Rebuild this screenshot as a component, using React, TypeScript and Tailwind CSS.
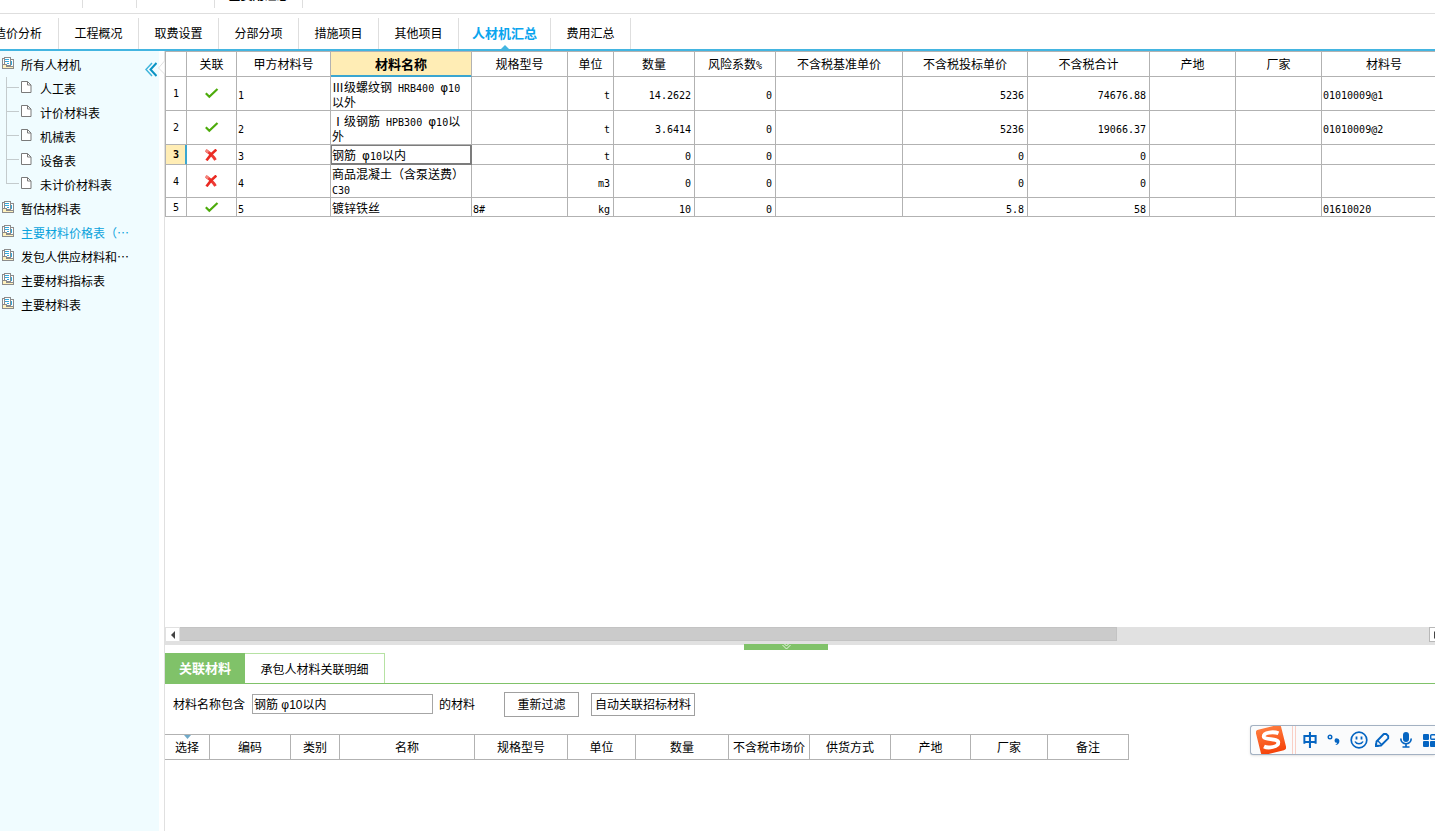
import { Fragment, useState } from "react";

const STRIP_CELLS = ["w-[83px]", "w-[54px]", "w-[78px]", "w-[88px]"];

const TABS = [
  { label: "造价分析", width: "w-[81px]" },
  { label: "工程概况", width: "w-20" },
  { label: "取费设置", width: "w-20" },
  { label: "分部分项", width: "w-20" },
  { label: "措施项目", width: "w-20" },
  { label: "其他项目", width: "w-20" },
  { label: "人材机汇总", width: "w-[92px]" },
  { label: "费用汇总", width: "w-20" },
];

const CHILDREN = ["人工表", "计价材料表", "机械表", "设备表", "未计价材料表"];

const FOLDERS = [
  "暂估材料表",
  "主要材料价格表（…",
  "发包人供应材料和…",
  "主要材料指标表",
  "主要材料表",
];

const COLUMNS = [
  { title: "", width: "w-[21px]", align: "text-center" },
  { title: "关联", width: "w-[50px]", align: "text-center" },
  { title: "甲方材料号", width: "w-[94px]", align: "text-left" },
  { title: "材料名称", width: "w-[141px]", align: "text-left" },
  { title: "规格型号", width: "w-[96px]", align: "text-left" },
  { title: "单位", width: "w-[46px]", align: "text-right" },
  { title: "数量", width: "w-[81px]", align: "text-right" },
  { title: "风险系数%", width: "w-[81px]", align: "text-right" },
  { title: "不含税基准单价", width: "w-[127px]", align: "text-right" },
  { title: "不含税投标单价", width: "w-[125px]", align: "text-right" },
  { title: "不含税合计", width: "w-[122px]", align: "text-right" },
  { title: "产地", width: "w-[86px]", align: "text-left" },
  { title: "厂家", width: "w-[86px]", align: "text-left" },
  { title: "材料号", width: "w-[125px]", align: "text-left" },
];

const ROWS = [
  {
    linked: true,
    height: "h-[34px]",
    cells: ["1", "Ⅲ级螺纹钢 HRB400 φ10以外", "", "t", "14.2622", "0", "", "5236", "74676.88", "", "", "01010009@1"],
  },
  {
    linked: true,
    height: "h-[34px]",
    cells: ["2", "Ⅰ级钢筋 HPB300 φ10以外", "", "t", "3.6414", "0", "", "5236", "19066.37", "", "", "01010009@2"],
  },
  {
    linked: false,
    height: "h-5",
    cells: ["3", "钢筋 φ10以内", "", "t", "0", "0", "", "0", "0", "", "", ""],
  },
  {
    linked: false,
    height: "h-[33px]",
    cells: ["4", "商品混凝土（含泵送费）C30", "", "m3", "0", "0", "", "0", "0", "", "", ""],
  },
  {
    linked: true,
    height: "h-[19px]",
    cells: ["5", "镀锌铁丝", "8#", "kg", "10", "0", "", "5.8", "58", "", "", "01610020"],
  },
];

const DETAIL_COLUMNS = [
  { title: "选择", width: "w-[45px]" },
  { title: "编码", width: "w-[81px]" },
  { title: "类别", width: "w-[49px]" },
  { title: "名称", width: "w-[135px]" },
  { title: "规格型号", width: "w-[93px]" },
  { title: "单位", width: "w-[68px]" },
  { title: "数量", width: "w-[93px]" },
  { title: "不含税市场价", width: "w-[81px]" },
  { title: "供货方式", width: "w-[81px]" },
  { title: "产地", width: "w-20" },
  { title: "厂家", width: "w-[77px]" },
  { title: "备注", width: "w-[81px]" },
];

// Half-width characters take half the advance of a Chinese character
function Mixed({ text }: { text: string }) {
  const parts = text.split(/([\x20-\x7e]+|φ)/);
  return (
    <>
      {parts.map((part, i) => {
        if (part === "φ") {
          return <span key={i} className="font-['DejaVu_Sans',sans-serif] leading-none">φ</span>;
        }
        if (i % 2 === 1) {
          return <span key={i} className="font-['DejaVu_Sans_Mono',monospace] text-[10px] leading-none">{part}</span>;
        }
        return <Fragment key={i}>{part}</Fragment>;
      })}
    </>
  );
}

function FolderIcon() {
  return (
    <svg className="mb-1 size-3 shrink-0" viewBox="0 0 12 12" shapeRendering="crispEdges">
      <path d="M0 1h2v7H0zM2 0h7v9H2zM9 2h3v8H9z" fill="#8c8c8c" />
      <path d="M1 2h1v6H1zM3 1h5v7H3zM9 3h2v6H9z" fill="#fff" />
      <path d="M3 2h4v1H3zM3 4h4v1H3zM5 6h2v1H5zM9 4h1v4H9z" fill="#35a9dc" />
      <path d="M0 7h5v2h7v3H0z" fill="#8c8c8c" />
      <path d="M1 8h3v2h7v1H1z" fill="#fff2bd" />
    </svg>
  );
}

function PageIcon() {
  return (
    <svg className="mb-1 h-3 w-[11px] shrink-0" viewBox="0 0 11 12" fill="none">
      <path d="M.5.5h6l3.500 3.500v7.500H.5z" fill="#fff" stroke="#7a7a7a" />
      <path d="M6.500.5V4H10" stroke="#7a7a7a" />
    </svg>
  );
}

function CheckIcon() {
  return (
    <svg className="mx-auto h-[11px] w-[14px]" viewBox="0 0 14 11" fill="none" role="img" aria-label="已关联">
      <path d="M.8 5.300l3.500 3.500L12.500 1" stroke="#4dab0c" strokeWidth="2.200" />
    </svg>
  );
}

function CrossIcon() {
  return (
    <svg className="mr-auto ml-[18px] size-3" viewBox="0 0 12 12" fill="none" role="img" aria-label="未关联">
      <path d="M1 1.500C4 3.500 8 6.500 10.500 11" stroke="#ee3a34" strokeWidth="2.800" />
      <path d="M11.400.6C7 4 4 7.500 1.500 11.400" stroke="#ea2a22" strokeWidth="2.600" />
      <path d="M.6 1.200l2.800 1.900" stroke="#f4847b" strokeWidth="2.600" />
    </svg>
  );
}

function Sidebar() {
  const [selected, setSelected] = useState(1);

  return (
    <aside className="relative w-[164px] shrink-0 pr-[5px]">
      <nav className="h-full bg-[#f0fcff] pt-0.5">
        <button className="flex h-6 items-center gap-[7px] pl-0.5">
          <FolderIcon />
          所有人材机
        </button>
        <ul>
          {CHILDREN.map((name, i) => (
            <li key={name} className="flex h-6 pl-1.5">
              <span className="flex w-[15px] flex-col">
                <span className="mr-0.5 h-[11px] border-b border-l border-[#c4cbcd]" />
                {i < CHILDREN.length - 1 && <span className="flex-1 border-l border-[#c4cbcd]" />}
              </span>
              <button className="flex items-center gap-2">
                <PageIcon />
                {name}
              </button>
            </li>
          ))}
        </ul>
        <ul>
          {FOLDERS.map((name, i) => (
            <li key={name}>
              <button
                onClick={() => setSelected(i)}
                className={`flex h-6 items-center gap-[7px] pl-0.5 whitespace-nowrap ${selected === i ? "text-[#0aa2dc]" : ""}`}
              >
                <FolderIcon />
                {name}
              </button>
            </li>
          ))}
        </ul>
      </nav>
      {/* Collapse handle */}
      <button aria-label="收起" className="absolute top-[11px] right-[7px]">
        <svg className="h-[15px] w-3" viewBox="0 0 12 15" fill="none" strokeWidth="1.500">
          <path d="M7 1L1 7.500 7 14" stroke="#41b6dd" />
          <path d="M11.500 1L5.500 7.500l6 6.500" stroke="#0a93c4" strokeWidth="2" />
        </svg>
      </button>
      <svg className="absolute top-1 -right-px h-6 w-[7px]" viewBox="0 0 7 24" fill="#fff">
        <path d="M6.500 0v6L.5 13l6 6v5" stroke="#e0e0e0" />
      </svg>
    </aside>
  );
}

function MaterialTable() {
  return (
    <table className="w-[1282px] table-fixed border-separate border-spacing-0 border-t border-l border-[#b2b2b2] leading-[15px]">
      <thead>
        <tr className="h-[25px]">
          {COLUMNS.map((col) => (
            <th
              key={col.title}
              className={`${col.width} border-r border-b p-0 pb-0.5 ${
                col.title === "材料名称"
                  ? "border-r-[#b2b2b2] border-b-[#3aa6d0] bg-[#ffedb5] text-[13px] font-bold shadow-[inset_0_-1px_0_#3aa6d0]"
                  : "border-[#b2b2b2] font-normal"
              }`}
            >
              <Mixed text={col.title} />
            </th>
          ))}
        </tr>
      </thead>
      <tbody>
        {ROWS.map((row, i) => {
          const current = i === 2;
          return (
            <tr key={i} className={row.height}>
              <th
                className={`border-r border-b border-[#b2b2b2] p-0 font-['DejaVu_Sans_Mono',monospace] text-[10px] ${
                  current ? "border-r-[#3aa6d0] bg-[#ffedb5] font-bold shadow-[inset_-1px_0_0_#3aa6d0]" : "font-normal"
                }`}
              >
                {i + 1}
              </th>
              <td className="border-r border-b border-[#b2b2b2] p-0">
                {row.linked ? <CheckIcon /> : <CrossIcon />}
              </td>
              {row.cells.map((cell, c) => (
                <td
                  key={c}
                  className={`border-r border-b py-0 pr-[3px] pl-px ${COLUMNS[c + 2].align} ${
                    current && c === 1
                      ? "border-[#7c7c7c] shadow-[inset_0_0_0_1px_#7c7c7c]"
                      : "border-[#b2b2b2]"
                  }`}
                >
                  <Mixed text={cell} />
                </td>
              ))}
            </tr>
          );
        })}
      </tbody>
    </table>
  );
}

function HorizontalScrollbar() {
  return (
    <div className="-mr-2 flex h-[18px] bg-[#e1e1e1] pl-px">
      <button aria-label="向左滚动" className="mt-px flex h-[13px] w-[13px] items-center justify-center bg-white">
        <svg className="h-2 w-1" viewBox="0 0 4 8">
          <path d="M4 0v8L0 4z" fill="#444" />
        </svg>
      </button>
      <div className="flex-1 pl-px">
        <div className="h-[14px] w-3/4 border-y border-r border-[#c3c3c3] bg-[#cbcbcb]" />
      </div>
      <button aria-label="向右滚动" className="flex h-[15px] w-[14px] items-center border border-[#b8b8b8] bg-white pl-1">
        <svg className="h-2 w-1" viewBox="0 0 4 8">
          <path d="M0 0v8l4-4z" fill="#444" />
        </svg>
      </button>
    </div>
  );
}

function LinkPanel() {
  const [keyword, setKeyword] = useState("钢筋 φ10以内");

  return (
    <section className="min-h-[186px] shrink-0">
      <div className="h-2">
        <button aria-label="折叠面板" className="relative -top-px ml-[579px] flex h-1.5 w-[84px] justify-center bg-[#80c269]">
          <svg className="h-1.5 w-[9px]" viewBox="0 0 9 6" fill="none" stroke="#e9f6e4">
            <path d="M.5 1L4.500 5l4-4M2.500 0l2 2 2-2" />
          </svg>
        </button>
      </div>
      <div className="flex border-b border-[#80c269]">
        <button className="h-[30px] w-20 bg-[#80c269] text-[13px] font-bold text-white">关联材料</button>
        <button className="h-[30px] w-[140px] border-t border-r border-[#b6e2a3]">承包人材料关联明细</button>
      </div>
      <div className="mb-2.5 flex h-10 items-center pl-2">
        <label htmlFor="keyword">材料名称包含</label>
        <input
          id="keyword"
          value={keyword}
          onChange={(e) => setKeyword(e.target.value)}
          className="mr-1.5 ml-[7px] h-5 w-[181px] border border-[#a6a6a6] bg-white px-px pb-0.5 font-['Liberation_Sans','Noto_Sans_CJK_SC',sans-serif] outline-none"
        />
        <span className="mr-[29px]">的材料</span>
        <button className="mr-3 h-[25px] w-[75px] border border-[#a0a0a0]">重新过滤</button>
        <button className="h-[23px] w-[104px] border border-[#a0a0a0]">自动关联招标材料</button>
      </div>
      <table className="w-[964px] table-fixed border-separate border-spacing-0 border-t border-[#b2b2b2]">
        <thead>
          <tr className="h-[25px]">
            {DETAIL_COLUMNS.map((col, i) => (
              <th key={col.title} className={`${col.width} relative border-r border-b border-[#b2b2b2] p-0 font-normal whitespace-nowrap`}>
                {i === 0 && (
                  <svg className="absolute top-0 left-[19px] h-1 w-[7px]" viewBox="0 0 7 4">
                    <path d="M0 0h7L3.500 4z" fill="#6fa9c8" />
                  </svg>
                )}
                {col.title}
              </th>
            ))}
          </tr>
        </thead>
      </table>
    </section>
  );
}

function ImeBar() {
  return (
    <div className="fixed right-0 bottom-[76px] flex h-[30px] w-[185px] items-center overflow-hidden rounded-l-[3px] border border-r-0 border-[#a3b1c2] bg-[#fafbfc] text-[#0565c2] shadow">
      <svg className="ml-[5px] size-[30px] shrink-0" viewBox="0 0 30 30" fill="none">
        <defs>
          <linearGradient id="logo" x1="0" y1="0" x2="0" y2="1">
            <stop offset="0" stopColor="#ff7b3d" />
            <stop offset="1" stopColor="#f5430a" />
          </linearGradient>
        </defs>
        <rect x="2" y="2" width="26" height="26" rx="3" fill="url(#logo)" transform="rotate(-14 15 15)" />
        <path
          d="M22.500 8.300C18 6.500 7.500 7 7.700 11.300c.2 4 14.300 1.700 14.600 6.200.3 4.700-10.300 6-14.300 4"
          stroke="#fff"
          strokeWidth="3.800"
        />
      </svg>
      <span className="ml-1.5 h-full w-1 shrink-0 border-x border-[#f9cfc5]" />
      <button className="ml-1.5 w-4 shrink-0 pb-0.5 text-base leading-none font-bold">中</button>
      <button aria-label="标点" className="ml-2 shrink-0">
        <svg className="h-3 w-4" viewBox="0 0 16 12" fill="none">
          <circle cx="4" cy="3" r="1.800" stroke="currentColor" strokeWidth="1.400" />
          <path d="M11.300 4.500a2.200 2.200 0 1 0-.2 4.300c-.2 1.100-.9 1.700-1.900 2.300 3-.3 4.200-2.100 4.200-4.200 0-1.500-.9-2.400-2.100-2.400z" fill="currentColor" />
        </svg>
      </button>
      <button aria-label="表情" className="ml-2 shrink-0">
        <svg className="size-[18px]" viewBox="0 0 18 18" fill="none" stroke="currentColor">
          <circle cx="9" cy="9" r="7.800" strokeWidth="1.700" />
          <path d="M6.500 5.500v3M11.500 5.500v3" strokeWidth="1.800" />
          <path d="M5 10.500c1.500 3 6.500 3 8 0" strokeWidth="1.600" />
        </svg>
      </button>
      <button aria-label="手写" className="ml-1.5 shrink-0">
        <svg className="size-4" viewBox="0 0 16 16" fill="none" stroke="currentColor" strokeWidth="1.900" strokeLinejoin="round">
          <path d="M2 14l.5-4.500L9.800 2h2.400l2 2v2.400L7 13.500z" />
          <path d="M3.500 8.500l4.500 4.500" strokeWidth="1.400" />
          <path d="M1 11v4h4z" fill="currentColor" stroke="none" />
        </svg>
      </button>
      <button aria-label="语音" className="ml-[9px] shrink-0">
        <svg className="h-4 w-3.5" viewBox="0 0 14 16" fill="none" stroke="currentColor">
          <rect x="4" y="0" width="6" height="10" rx="3" fill="currentColor" stroke="none" />
          <path d="M1.800 6.500c0 7 10.400 7 10.400 0M7 11.500V15M3.500 15h7" strokeWidth="1.700" />
        </svg>
      </button>
      <button aria-label="工具箱" className="ml-2.5 shrink-0">
        <svg className="h-[13px] w-3.5" viewBox="0 0 14 13" fill="currentColor">
          <rect width="6" height="6" rx="1" />
          <rect y="7" width="6" height="6" rx="1" />
          <rect x="7" y="7" width="6" height="6" rx="1" />
          <rect x="7.700" y=".7" width="5" height="4.600" rx="1" fill="none" stroke="currentColor" strokeWidth="1.400" />
        </svg>
      </button>
    </div>
  );
}

export default function App() {
  const [tab, setTab] = useState("人材机汇总");

  return (
    <div className="flex h-screen flex-col overflow-hidden bg-white font-['Noto_Sans_CJK_SC',sans-serif] text-xs leading-[18px] text-black">
      {/* Upper tab strip, scrolled almost out of view */}
      <div className="flex h-3.5 shrink-0 overflow-hidden border-b border-[#dedede]">
        {STRIP_CELLS.map((width, i) => (
          <div key={width} className={`${width} h-2 border-r border-[#dedede]`}>
            {i === 3 && <span className="-mt-[14px] block text-center font-bold">全费用汇总</span>}
          </div>
        ))}
      </div>

      <div role="tablist" className="-ml-[22px] flex h-[37px] shrink-0 items-end border-b-2 border-[#43b5e1]">
        {TABS.map(({ label, width }) => (
          <button
            key={label}
            role="tab"
            aria-selected={tab === label}
            onClick={() => setTab(label)}
            className={`${width} relative h-[31px] border-r border-[#dedede] pb-0.5 ${
              tab === label ? "text-[13px] font-bold text-[#0aa5ee]" : ""
            }`}
          >
            {label}
            {tab === label && (
              <svg className="absolute bottom-0 left-1/2 -ml-1 h-1 w-2" viewBox="0 0 8 4">
                <path d="M0 4l4-4 4 4z" fill="#43b5e1" />
              </svg>
            )}
          </button>
        ))}
      </div>

      <div className="flex min-h-0 flex-1">
        <Sidebar />
        <main className="flex min-w-0 flex-1 flex-col overflow-hidden border-l border-[#e0e0e0]">
          <div className="min-h-0 flex-1 overflow-hidden">
            <MaterialTable />
          </div>
          <HorizontalScrollbar />
          <LinkPanel />
        </main>
      </div>

      <ImeBar />
    </div>
  );
}
